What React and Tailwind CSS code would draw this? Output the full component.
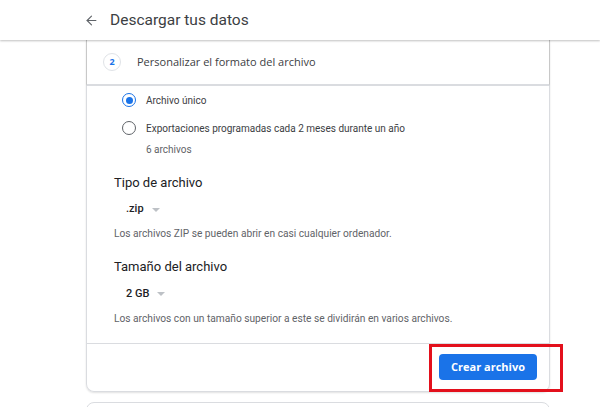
import { ArrowLeft } from "lucide-react";

const Radio = ({ checked, label, sub }) => (
    <div className="flex items-start gap-[10px]">
        <div
            className={`mt-[-1px] w-[14px] h-[14px] rounded-full border-[1.5px] flex items-center justify-center shrink-0 ${
                checked ? "border-[#1a73e8]" : "border-[#5f6368]"
            }`}
        >
            {checked && <div className="w-[7px] h-[7px] rounded-full bg-[#1a73e8]" />}
        </div>
        <div>
            <div className="text-[10px] leading-[13px] text-[#3c4043]">{label}</div>
            {sub && <div className="text-[10px] leading-[13px] text-[#5f6368] mt-[8px]">{sub}</div>}
        </div>
    </div>
);

const Select = ({ value }) => (
    <div className="flex items-center gap-[8px] pl-[12px] h-[18px]">
        <span className="text-[11px] font-medium text-[#202124]">{value}</span>
        <span className="w-0 h-0 border-l-[4px] border-r-[4px] border-t-[4px] border-l-transparent border-r-transparent border-t-[#bdc1c6]" />
    </div>
);

export default function App() {
    return (
        <div className="w-[600px] h-[407px] bg-white overflow-hidden relative" style={{ fontFamily: "Roboto, sans-serif" }}>
            {/* Top bar */}
            <header className="h-[40px] flex items-center pl-[84px] gap-[11px] bg-white shadow-[0_1px_2px_rgba(0,0,0,0.25)] relative z-10">
                <ArrowLeft size={15} strokeWidth={1.8} className="text-[#5f6368]" />
                <h1 className="text-[15.5px] text-[#3c4043] mt-[2px]">Descargar tus datos</h1>
            </header>

            <main className="ml-[86px] w-[464px]">
                {/* Card */}
                <div className="border border-t-0 border-[#dadce0] rounded-b-[8px] shadow-[0_1px_2px_rgba(0,0,0,0.12)]">
                    {/* Step header */}
                    <div className="h-[46px] flex items-center gap-[16px] pl-[16px] border-b-2 border-[#dadce0] border-r border-r-[#c8c8c8] border-l border-l-[#c8c8c8] -mx-px">
                        <div
                            className="w-[18px] h-[18px] rounded-full border border-[#e0e3e7] flex items-center justify-center text-[9px] font-bold text-[#1a73e8]"
                            style={{ fontFamily: "'Open Sans', sans-serif" }}
                        >
                            2
                        </div>
                        <span className="text-[11px] text-[#3c4043]" style={{ fontFamily: "'Open Sans', sans-serif" }}>
                            Personalizar el formato del archivo
                        </span>
                    </div>

                    {/* Body */}
                    <div className="pl-[35px] pt-[8px] flex flex-col gap-[15px]">
                        <Radio checked label="Archivo único" />
                        <Radio label="Exportaciones programadas cada 2 meses durante un año" sub="6 archivos" />
                    </div>

                    <div className="pl-[27px] pt-[17px] pb-[16px]">
                        <div className="text-[13px] text-[#202124]">Tipo de archivo</div>
                        <div className="mt-[8px]">
                            <Select value=".zip" />
                        </div>
                        <div className="mt-[7px] text-[10.2px] text-[#5f6368]">Los archivos ZIP se pueden abrir en casi cualquier ordenador.</div>

                        <div className="mt-[16px] text-[13px] text-[#202124]">Tamaño del archivo</div>
                        <div className="mt-[9px]">
                            <Select value="2 GB" />
                        </div>
                        <div className="mt-[8px] text-[10.2px] text-[#5f6368]">
                            Los archivos con un tamaño superior a este se dividirán en varios archivos.
                        </div>
                    </div>

                    {/* Footer */}
                    <div className="border-t border-[#dadce0] h-[48px] flex items-center justify-end pr-[12px]">
                        <div className="relative">
                            <button className="w-[98px] h-[26px] rounded-[4px] bg-[#1a73e8] text-white text-[11px] font-bold" style={{ fontFamily: "'Open Sans', sans-serif" }}>
                                Crear archivo
                            </button>
                            {/* Highlight */}
                            <div className="absolute -left-[10px] -top-[10px] -right-[26px] -bottom-[12px] border-[3px] border-[#e3101c]" />
                        </div>
                    </div>
                </div>

                {/* Next card */}
                <div className="mt-[10px] h-[40px] border border-[#dadce0] rounded-t-[8px]" />
            </main>
        </div>
    );
}
